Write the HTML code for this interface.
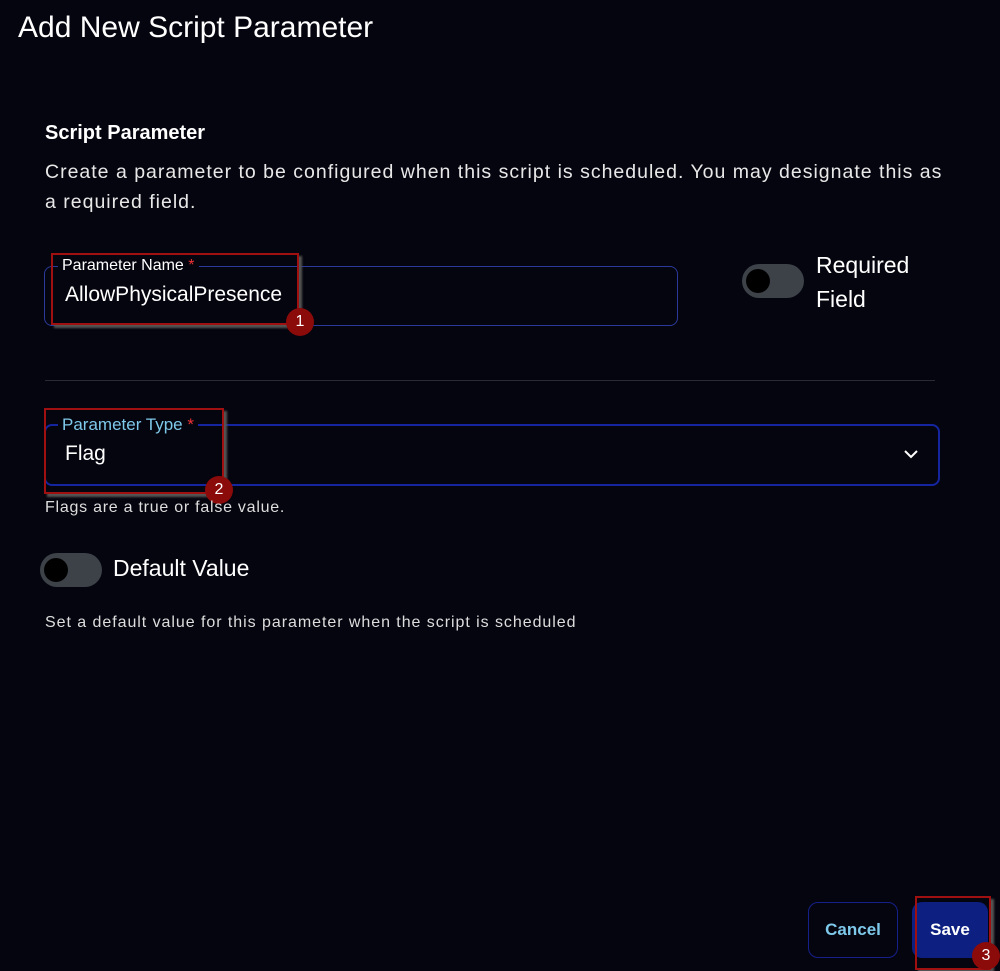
<!DOCTYPE html>
<html><head><style>
body{margin:0;width:1000px;height:971px;background:#05050f;font-family:"Liberation Sans",sans-serif;color:#fff;position:relative;overflow:hidden}
.a{position:absolute;white-space:nowrap}
.badge{position:absolute;width:28px;height:28px;border-radius:50%;background:#8b0a0a;color:#fff;font-size:16px;text-align:center;line-height:28px}
.hl{position:absolute;border:2px solid #a01010;box-shadow:3px 3px 2px #555}
.tog{position:absolute;width:62px;height:34px;border-radius:17px;background:#3d4249}
.tog::after{content:"";position:absolute;left:4px;top:5px;width:24px;height:24px;border-radius:50%;background:#000}
</style></head><body>
<div class="a" style="left:18px;top:11px;font-size:30px">Add New Script Parameter</div>
<div class="a" style="left:45px;top:122px;font-size:20px;font-weight:bold">Script Parameter</div>
<div class="a" style="left:45px;top:157px;font-size:19.5px;letter-spacing:1px;line-height:30px;color:#e8e8e8">Create a parameter to be configured when this script is scheduled. You may designate this as<br>a required field.</div>

<div class="a" style="left:44px;top:266px;width:632px;height:58px;border:1px solid #2a3a9a;border-radius:8px"></div>
<div class="a" style="left:58px;top:257px;background:#05050f;padding:0 4px;font-size:16px">Parameter Name <span style="color:#e33">*</span></div>
<div class="a" style="left:65px;top:283px;font-size:21px">AllowPhysicalPresence</div>
<div class="hl" style="left:51px;top:253px;width:244px;height:68px"></div>
<div class="badge" style="left:286px;top:308px">1</div>

<div class="tog" style="left:742px;top:264px"></div>
<div class="a" style="left:816px;top:248px;font-size:23px;line-height:34px">Required<br>Field</div>

<div class="a" style="left:45px;top:380px;width:890px;height:1px;background:#2a2a35"></div>

<div class="a" style="left:44px;top:424px;width:892px;height:58px;border:2px solid #1525a0;border-radius:8px"></div>
<div class="a" style="left:58px;top:415px;background:#05050f;padding:0 4px;font-size:17px;color:#7ec8ea">Parameter Type <span style="color:#e33">*</span></div>
<div class="a" style="left:65px;top:442px;font-size:21px">Flag</div>
<svg class="a" style="left:903px;top:448px" width="16" height="12"><path d="M2 3l6 6 6-6" stroke="#fff" stroke-width="2" fill="none"/></svg>
<div class="hl" style="left:44px;top:408px;width:176px;height:82px"></div>
<div class="badge" style="left:205px;top:476px">2</div>
<div class="a" style="left:45px;top:499px;font-size:16px;letter-spacing:0.75px;color:#ddd">Flags are a true or false value.</div>

<div class="tog" style="left:40px;top:553px"></div>
<div class="a" style="left:113px;top:555px;font-size:23px">Default Value</div>
<div class="a" style="left:45px;top:614px;font-size:16px;letter-spacing:0.95px;color:#ddd">Set a default value for this parameter when the script is scheduled</div>

<div class="a" style="left:808px;top:902px;width:90px;height:56px;border:1px solid #15208a;border-radius:10px;box-sizing:border-box;text-align:center;line-height:54px;font-weight:bold;font-size:17px;color:#7ec8ea">Cancel</div>
<div class="a" style="left:912px;top:902px;width:76px;height:56px;background:#0d1f80;border-radius:10px;text-align:center;line-height:56px;font-weight:bold;font-size:17px">Save</div>
<div class="hl" style="left:915px;top:896px;width:72px;height:70px"></div>
<div class="badge" style="left:972px;top:942px">3</div>
</body></html>
